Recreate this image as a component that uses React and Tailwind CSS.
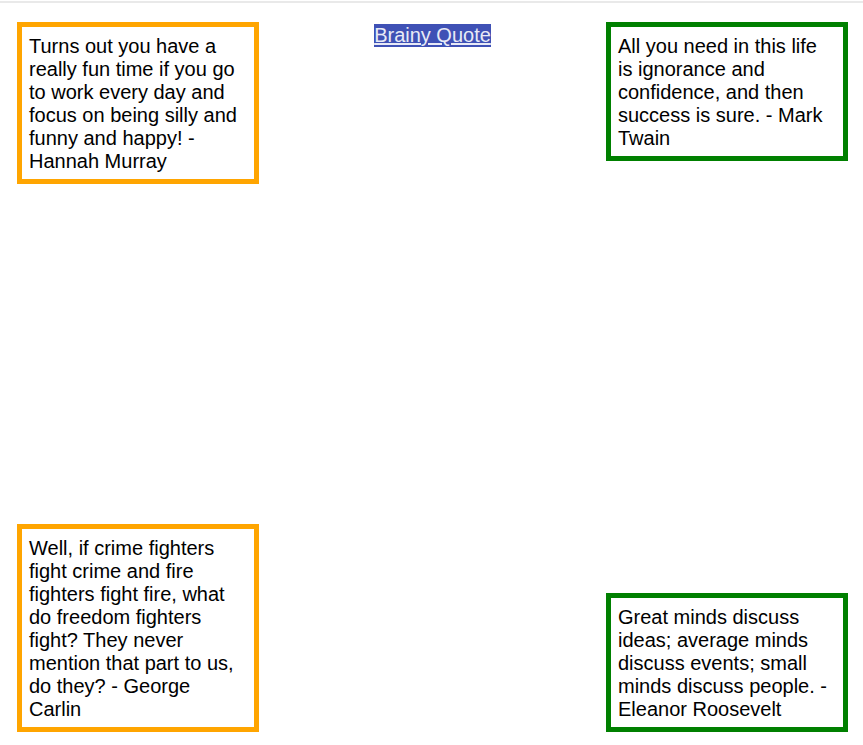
const quotes = {
    topLeft: 'Turns out you have a really fun time if you go to work every day and focus on being silly and funny and happy! - Hannah Murray',
    topRight: 'All you need in this life is ignorance and confidence, and then success is sure. - Mark Twain',
    bottomLeft: 'Well, if crime fighters fight crime and fire fighters fight fire, what do freedom fighters fight? They never mention that part to us, do they? - George Carlin',
    bottomRight: 'Great minds discuss ideas; average minds discuss events; small minds discuss people. - Eleanor Roosevelt',
};

const QuoteBox = ({ text, tone }) => (
    <div
        className={
            tone === 'orange'
                ? 'w-[242px] border-[5px] border-[#ffa500] px-[7px] pt-[8px] pb-[6px] bg-white'
                : 'w-[242px] border-[5px] border-[#008000] px-[7px] pt-[8px] pb-[6px] bg-white'
        }
    >
        <p className="text-[20px] leading-[23px] text-black">{text}</p>
    </div>
);

export default function App() {
    return (
        <div className="w-full h-[745px] bg-white flex flex-col font-['Liberation_Sans',Arial,sans-serif]">
            {/* thin top rule */}
            <div className="pt-[1px]">
                <div className="h-[2px] bg-[#e9e9e9]"></div>
            </div>

            <div className="flex-1 flex flex-col justify-between pl-[17px] pr-[15px] pt-[19px] pb-[13px]">
                {/* Top row */}
                <div className="flex items-start justify-between">
                    <QuoteBox text={quotes.topLeft} tone="orange" />
                    <a
                        href="#"
                        className="mt-[2px] text-[20px] leading-[23px] bg-[#3f51b5] text-[#e8eaf6] underline"
                    >
                        Brainy Quote
                    </a>
                    <QuoteBox text={quotes.topRight} tone="green" />
                </div>

                {/* Bottom row */}
                <div className="flex items-end justify-between">
                    <QuoteBox text={quotes.bottomLeft} tone="orange" />
                    <QuoteBox text={quotes.bottomRight} tone="green" />
                </div>
            </div>
        </div>
    );
}
